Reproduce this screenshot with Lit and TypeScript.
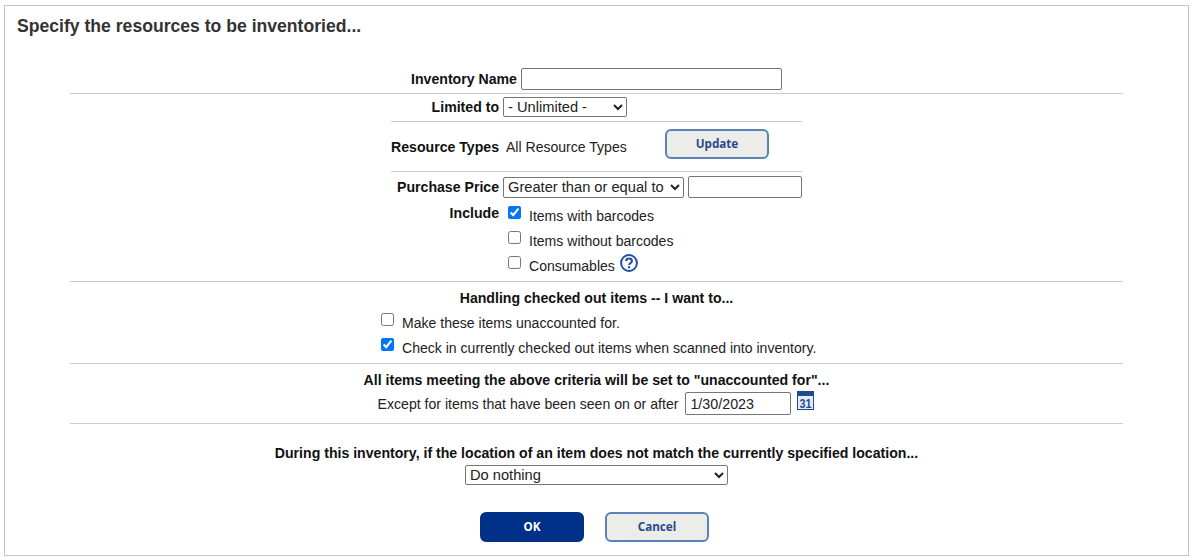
import { LitElement, html, css } from "lit";
import { customElement } from "lit/decorators.js";

@customElement("app-root")
export class AppRoot extends LitElement {
  static styles = css`
    :host { display: block; font-family: "Liberation Sans", Arial, sans-serif; font-size: 14.05px; color: #222; background: #fff; height: 558px; overflow: hidden; }
    * { box-sizing: border-box; }
    .panel { margin: 5px 0 0 4px; width: 1185px; height: 551px; border: 1px solid #c4c4c4; position: relative; padding: 0 65px; }
    h1 { margin: 0; height: 62px; font-size: 17.6px; line-height: 20px; font-weight: 700; color: #333; padding-top: 10px; margin-left: -53px; }
    hr { margin: 0; border: 0; border-top: 1px solid #ccc; height: 1px; }
    .row { display: flex; align-items: center; }
    .center { justify-content: center; }
    b { font-weight: 700; color: #111; font-size: 14.12px; }
    input[type=text], select { font: 14.67px "Liberation Sans", Arial, sans-serif; color: #222; background: #fff; border: 1px solid #767676; border-radius: 2px; margin: 0; }
    input[type=text] { padding: 1px 4px; font-size: 14.3px; }
    .name { height: 25px; align-items: flex-start; }
    .name b { line-height: 22px; }
    .name input { width: 261px; height: 22px; margin-left: 4px; }
    .form { width: 411px; margin: 0 auto; }
    .f { display: grid; grid-template-columns: 108px 1fr; column-gap: 4px; align-items: center; }
    .f .l { text-align: right; }
    .limited { height: 27px; padding-bottom: 2px; }
    .limited select { width: 124px; height: 20px; display: block; }
    .types { height: 49px; }
    .types .v { display: flex; align-items: center; padding-left: 3px; }
    .types .t { width: 159px; }
    .types .btn { margin-bottom: 6px; }
    .btn { font: 700 11.7px "Noto Sans", "Open Sans", sans-serif; width: 104px; height: 30px; border-radius: 6px; border: 2px solid #5b82b8; background: #ecece8; color: #2a4a8f; display: flex; align-items: center; justify-content: center; padding: 0 0 1px; flex: none; }
    .btn.primary { background: #003087; border-color: #003087; color: #fff; }
    .price { padding-top: 4px; height: 26px; }
    .price .v { display: flex; gap: 4px; align-items: center; }
    .price select { width: 181px; height: 21px; }
    .price input { width: 114px; height: 22px; }
    .inc { display: grid; grid-template-columns: 108px 1fr; column-gap: 4px; height: 83px; padding-top: 5px; }
    .inc .l { text-align: right; padding-top: 2px; }
    .cb { display: flex; height: 25px; align-items: flex-start; }
    .cb input { margin: 0; width: 13px; height: 13px; flex: none; }
    .cb span { line-height: 16px; margin-left: 8px; padding-top: 2px; }
    .inc .opts { padding: 3px 0 0 5px; }
    .help { margin-left: 5px; margin-top: -2px; flex: none; }
    .head { text-align: center; line-height: 16px; }
    .handling { height: 81px; padding-top: 8px; }
    .handling .list { margin: 7px 0 0 311px; }
    .except { height: 59px; padding-top: 8px; }
    .except .row { height: 25px; margin-top: 3px; padding-right: 1px; }
    .except span { font-size: 14.1px; }
    .except input { width: 106px; height: 23px; margin-left: 7px; }
    .cal { margin-left: 6px; margin-top: -6px; flex: none; }
    .loc { padding-top: 21px; height: 88px; text-align: center; }
    .loc select { width: 263px; height: 20px; margin: 4px auto 0; display: block; }
    .buttons { display: flex; justify-content: center; gap: 21px; padding-right: 4px; }
    .buttons .btn { padding-bottom: 3px; }
  `;

  render() {
    return html`<div class="panel">
      <h1>Specify the resources to be inventoried...</h1>
      <div class="row center name"><b>Inventory Name</b><input type="text" /></div>
      <hr />
      <div class="form">
        <div class="f limited"><b class="l">Limited to</b><div><select><option>- Unlimited -</option></select></div></div>
        <hr />
        <div class="f types"><b class="l">Resource Types</b><div class="v"><span class="t">All Resource Types</span><button class="btn">Update</button></div></div>
        <hr />
        <div class="f price"><b class="l">Purchase Price</b><div class="v"><select><option>Greater than or equal to</option></select><input type="text" /></div></div>
        <div class="inc">
          <b class="l">Include</b>
          <div class="opts">
            <label class="cb"><input type="checkbox" checked /><span>Items with barcodes</span></label>
            <label class="cb"><input type="checkbox" /><span>Items without barcodes</span></label>
            <label class="cb"><input type="checkbox" /><span>Consumables</span>
              <svg class="help" width="18" height="18" viewBox="0 0 18 18"><circle cx="9" cy="9" r="7.9" fill="#fff" stroke="#23509e" stroke-width="2"/><path d="M6 7c.2-1.6 1.4-2.5 3-2.5 1.7 0 2.9 1 2.9 2.4 0 1.1-.6 1.7-1.5 2.3-.8.5-1.2 1-1.2 1.7" fill="none" stroke="#23509e" stroke-width="2.1"/><rect x="8" y="12.2" width="2.1" height="2.1" fill="#23509e"/></svg>
            </label>
          </div>
        </div>
      </div>
      <hr />
      <div class="handling">
        <div class="head"><b>Handling checked out items -- I want to...</b></div>
        <div class="list">
          <label class="cb"><input type="checkbox" /><span>Make these items unaccounted for.</span></label>
          <label class="cb"><input type="checkbox" checked /><span>Check in currently checked out items when scanned into inventory.</span></label>
        </div>
      </div>
      <hr />
      <div class="except">
        <div class="head"><b>All items meeting the above criteria will be set to "unaccounted for"...</b></div>
        <div class="row center"><span>Except for items that have been seen on or after</span><input type="text" value="1/30/2023" />
          <svg class="cal" width="17" height="19" viewBox="0 0 17 19"><rect x="0.5" y="0.5" width="16" height="18" fill="#e6ecf7" stroke="#1f4b92"/><rect x="0" y="0" width="17" height="5" fill="#1f4b92"/><text x="8.5" y="16.5" text-anchor="middle" font-family="Liberation Sans" font-weight="700" font-size="13" textLength="12" lengthAdjust="spacingAndGlyphs" fill="#1f4b92">31</text></svg>
        </div>
      </div>
      <hr />
      <div class="loc">
        <b>During this inventory, if the location of an item does not match the currently specified location...</b>
        <select><option>Do nothing</option></select>
      </div>
      <div class="buttons"><button class="btn primary">OK</button><button class="btn">Cancel</button></div>
    </div>`;
  }
}
